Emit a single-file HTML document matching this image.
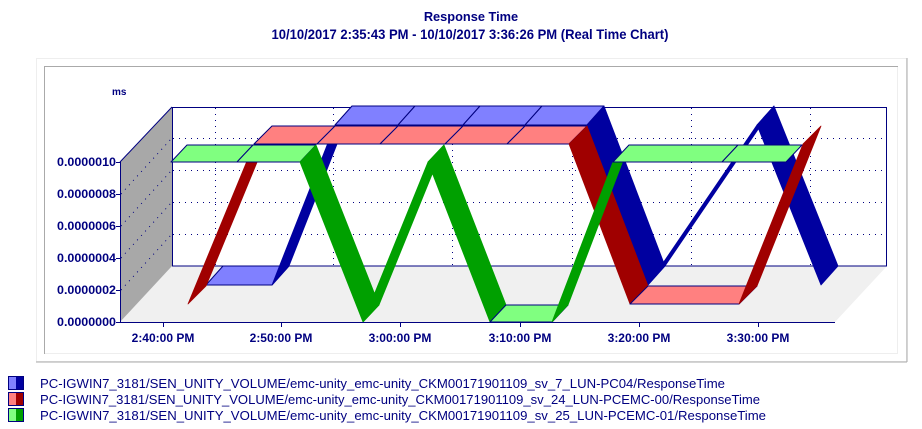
<!DOCTYPE html>
<html><head><meta charset="utf-8"><style>
html,body{margin:0;padding:0;background:#fff;width:922px;height:429px;overflow:hidden}
svg{position:absolute;left:0;top:0}
.t{font-family:"Liberation Sans",Arial,sans-serif;font-weight:bold;fill:#000080}
.lg{font-family:"Liberation Sans",Arial,sans-serif;fill:#000080;font-size:13.2px}
</style></head><body>
<svg id="s" width="922" height="429" xmlns="http://www.w3.org/2000/svg">
<text class="t" x="471" y="21" font-size="12.8" text-anchor="middle">Response Time</text>
<text class="t" x="470" y="39" font-size="13.6" text-anchor="middle" textLength="397" lengthAdjust="spacingAndGlyphs">10/10/2017 2:35:43 PM - 10/10/2017 3:36:26 PM (Real Time Chart)</text>
<!-- outer frame -->
<rect x="36.5" y="58.5" width="870" height="303" fill="none" stroke="#eeeeee"/>
<line x1="907" y1="58" x2="907" y2="362" stroke="#aaaaaa"/>
<line x1="36" y1="362" x2="907" y2="362" stroke="#aaaaaa"/>
<rect x="44.5" y="66.5" width="853" height="287" fill="none" stroke="#eeeeee"/>
<line x1="44.5" y1="66" x2="44.5" y2="354" stroke="#aaaaaa"/>
<line x1="44" y1="66.5" x2="898" y2="66.5" stroke="#aaaaaa"/>
<text class="t" x="112" y="95" font-size="10">ms</text>
<!-- floor -->
<polygon points="120,322 172,266 887,266 835,322" fill="#f0f0f0"/>
<!-- left wall -->
<polygon points="120,162 172,107 172,266 120,322" fill="#a8a8a8"/>
<line x1="120" y1="162" x2="172" y2="107" stroke="#000080"/>
<!-- back wall -->
<rect x="172.5" y="107.5" width="714" height="158.5" fill="#fff" stroke="#000080"/>
<g id="grid" stroke="#000080" stroke-dasharray="1 5" fill="none"></g>
<g id="rib"></g>
<!-- axes -->
<line x1="120.5" y1="162" x2="120.5" y2="322" stroke="#000080"/>
<line x1="120" y1="322.5" x2="835" y2="322.5" stroke="#000080"/>
<g id="ticks" stroke="#000080"></g>
<g class="t" font-size="12" text-anchor="end">
<text x="116" y="166" textLength="59" lengthAdjust="spacingAndGlyphs">0.0000010</text>
<text x="116" y="198" textLength="59" lengthAdjust="spacingAndGlyphs">0.0000008</text>
<text x="116" y="230" textLength="59" lengthAdjust="spacingAndGlyphs">0.0000006</text>
<text x="116" y="262" textLength="59" lengthAdjust="spacingAndGlyphs">0.0000004</text>
<text x="116" y="294" textLength="59" lengthAdjust="spacingAndGlyphs">0.0000002</text>
<text x="116" y="326" textLength="59" lengthAdjust="spacingAndGlyphs">0.0000000</text>
</g>
<g class="t" font-size="12" text-anchor="middle">
<text x="163" y="342">2:40:00 PM</text>
<text x="281" y="342">2:50:00 PM</text>
<text x="400" y="342">3:00:00 PM</text>
<text x="520" y="342">3:10:00 PM</text>
<text x="639" y="342">3:20:00 PM</text>
<text x="758" y="342">3:30:00 PM</text>
</g>
<!-- legend -->
<g stroke="#000080">
<rect x="8.5" y="376.5" width="15" height="13" fill="#0000a0"/><rect x="9" y="377" width="7" height="12" fill="#8080ff" stroke="none"/>
<rect x="8.5" y="392.5" width="15" height="13" fill="#a00000"/><rect x="9" y="393" width="7" height="12" fill="#ff8080" stroke="none"/>
<rect x="8.5" y="408.5" width="15" height="13" fill="#00a000"/><rect x="9" y="409" width="7" height="12" fill="#80ff80" stroke="none"/>
</g>
<text class="lg" x="40" y="388" textLength="685" lengthAdjust="spacingAndGlyphs">PC-IGWIN7_3181/SEN_UNITY_VOLUME/emc-unity_emc-unity_CKM00171901109_sv_7_LUN-PC04/ResponseTime</text>
<text class="lg" x="40" y="404" textLength="720" lengthAdjust="spacingAndGlyphs">PC-IGWIN7_3181/SEN_UNITY_VOLUME/emc-unity_emc-unity_CKM00171901109_sv_24_LUN-PCEMC-00/ResponseTime</text>
<text class="lg" x="40" y="420" textLength="726" lengthAdjust="spacingAndGlyphs">PC-IGWIN7_3181/SEN_UNITY_VOLUME/emc-unity_emc-unity_CKM00171901109_sv_25_LUN-PCEMC-01/ResponseTime</text>
</svg>
<script>
var NS="http://www.w3.org/2000/svg";
function el(p,n,a){var e=document.createElementNS(NS,n);for(var k in a)e.setAttribute(k,a[k]);p.appendChild(e);return e;}
var g=document.getElementById('grid');
[138,170,202,234].forEach(function(y){el(g,'line',{x1:173,y1:y+.5,x2:886,y2:y+.5});});
[215,333,452,572,691,810].forEach(function(x){el(g,'line',{x1:x+.5,y1:108,x2:x+.5,y2:265});});
[0.2,0.4,0.6,0.8].forEach(function(v){var y=322-160*v;el(g,'line',{x1:121,y1:y,x2:171,y2:y-55});});
var t=document.getElementById('ticks');
for(var i=0;i<=5;i++){var y=162+32*i+.5;el(t,'line',{x1:116,y1:y,x2:120,y2:y});}
[163,281,400,520,639,758].forEach(function(x){el(t,'line',{x1:x+.5,y1:322,x2:x+.5,y2:327});});
var X=[171,237,300,363,428,490,552,613,722,786];
var S=[
 {d0:[35,-37],d1:[52,-56],l:'#8080ff',k:'#0000a0',v:[0,0,1,1,1,1,1,0,1,0]},
 {d0:[17,-18],d1:[35,-36],l:'#ff8080',k:'#a00000',v:[0,1,1,1,1,1,1,0,0,1]},
 {d0:[0,0],d1:[16,-17],l:'#80ff80',k:'#00a000',v:[1,1,1,0,1,0,0,1,1,1]}];
var r=document.getElementById('rib');
S.forEach(function(s){
 for(var i=0;i<X.length-1;i++){
  var x1=X[i],x2=X[i+1],y1=322-160*s.v[i],y2=322-160*s.v[i+1];
  var flat=s.v[i]==s.v[i+1];
  var p=[[x1+s.d0[0],y1+s.d0[1]],[x2+s.d0[0],y2+s.d0[1]],[x2+s.d1[0],y2+s.d1[1]],[x1+s.d1[0],y1+s.d1[1]]];
  el(r,'polygon',{points:p.map(function(q){return q.join(',')}).join(' '),fill:flat?s.l:s.k,stroke:flat?'#000080':s.k,'stroke-width':flat?1:0.8,'stroke-linejoin':'round'});
 }
});
</script>
</body></html>
